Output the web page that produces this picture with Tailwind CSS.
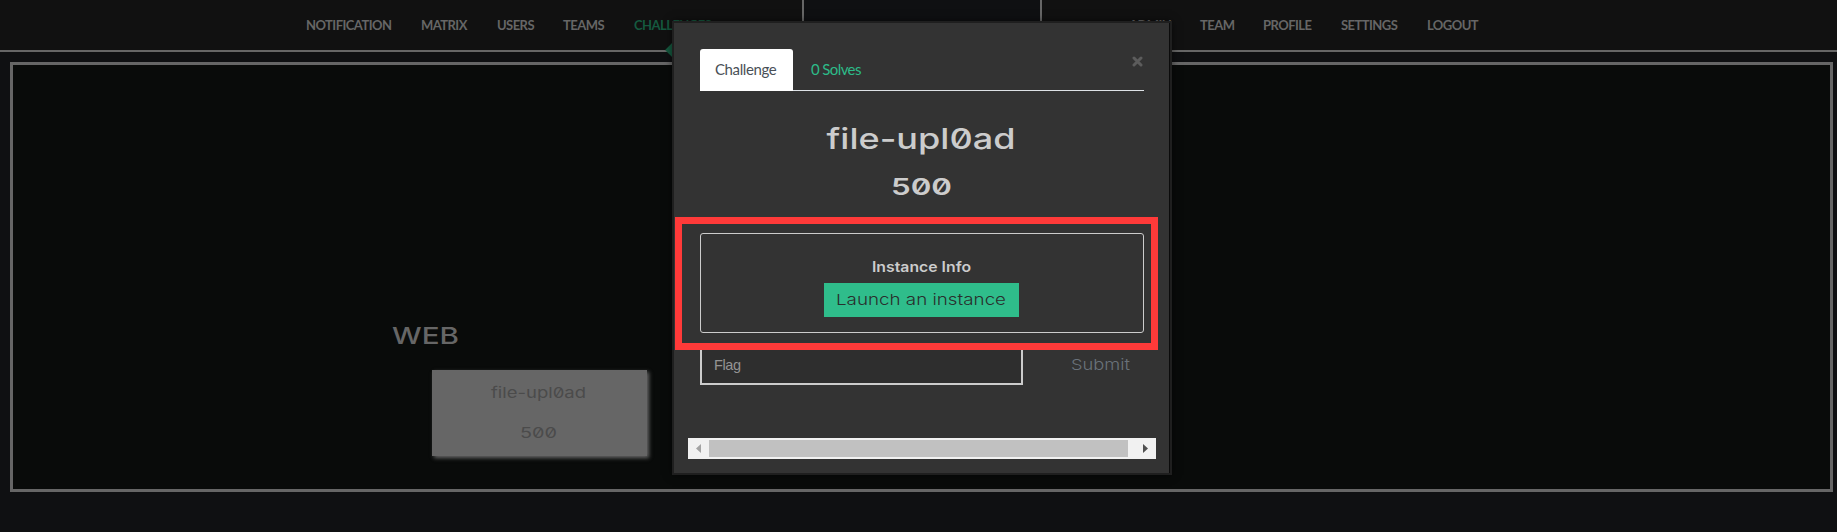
<!DOCTYPE html>
<html lang="en">
<head>
<meta charset="utf-8">
<title>Challenges</title>
<script src="https://cdn.jsdelivr.net/npm/@tailwindcss/browser@4"></script>
</head>
<body class="relative h-[532px] w-[1837px] overflow-hidden bg-[#0f1012] font-['Lato',sans-serif]">
  <!-- navigation -->
  <header class="flex h-[52px] border-b-2 border-[#666] text-[13px] leading-[20px] font-bold tracking-[-0.55px] text-[#666]">
    <nav class="flex w-[804px] gap-[30px] border-r-2 border-[#666] bg-[#111] pt-[15px] pl-[306px] whitespace-nowrap">
      <a class="w-[85px]">NOTIFICATION</a><a class="w-[46px]">MATRIX</a><a class="w-[36px]">USERS</a><a class="w-[41px]">TEAMS</a>
      <a class="relative w-[76px] text-[#15593f]">CHALLENGES<span class="absolute top-[28px] left-[34px] size-[14px] rotate-45 bg-[#15593f]"></span></a>
    </nav>
    <div class="w-[236px]"></div>
    <nav class="flex flex-1 gap-[30px] border-l-2 border-[#666] bg-[#111] pt-[15px] pl-[87px] whitespace-nowrap">
      <a class="w-[41px]">ADMIN</a><a class="w-[33px]">TEAM</a><a class="w-[48px]">PROFILE</a><a class="w-[56px]">SETTINGS</a><a>LOGOUT</a>
    </nav>
  </header>

  <!-- challenge board -->
  <main class="mt-[10px] ml-[10px] h-[430px] w-[1823px] border-[3px] border-[#666] bg-[#090b0a] pt-[256px] pl-[379px] font-['Inter',sans-serif]">
    <svg class="block h-[32px] w-[80px] [font-feature-settings:'zero']"><text x="0" y="23" textLength="67" lengthAdjust="spacingAndGlyphs" class="fill-[#666] text-[23.5px] font-medium">WEB</text></svg>
    <div class="mt-[17px] ml-[40px] h-[86px] w-[215px] bg-[#666] shadow-[2px_2px_4px_#666]">
      <svg class="block h-[86px] w-[215px] fill-[#4b4b4b] text-[15px] [font-feature-settings:'zero']">
        <text x="59" y="28" textLength="95" lengthAdjust="spacingAndGlyphs">file-upl0ad</text>
        <text x="88" y="68" textLength="37" lengthAdjust="spacingAndGlyphs">500</text>
      </svg>
    </div>
  </main>

  <!-- challenge dialog -->
  <section class="absolute top-[21px] left-[672px] h-[454px] w-[500px] border-2 border-[#1f1f1f] bg-[#333] pt-[26px] pl-[26px] shadow-[0_0_8px_#0008,inset_-1px_0_#0b0b0b]">
    <div class="flex h-[42px] w-[444px] border-b border-[#dee2e6] text-[15px] leading-[22px] tracking-[-0.4px]">
      <div class="h-[42px] w-[93px] rounded-t-[3px] bg-white pt-[9px] pl-[15px] text-[#495057]">Challenge</div>
      <div class="pt-[9px] pl-[18px] tracking-[-0.6px] text-[#2dbc89]">0 Solves</div>
    </div>
    <button class="absolute top-[33px] left-[458px]" aria-label="Close"><svg class="block size-[11px] stroke-[#5c5c5c]" viewBox="0 0 11 11"><path d="M2 2 9 9M9 2 2 9" stroke-width="3" stroke-linecap="round"/></svg></button>
    <svg class="block h-[142px] w-[444px] fill-[#ccc] font-['Inter',sans-serif] [font-feature-settings:'zero']">
      <text x="126.5" y="58" textLength="189" lengthAdjust="spacingAndGlyphs" class="text-[28.5px] font-medium">file-upl0ad</text>
      <text x="191" y="104" textLength="61" lengthAdjust="spacingAndGlyphs" class="text-[23.5px] font-semibold">500</text>
    </svg>
    <div class="flex h-[100px] w-[444px] flex-col items-center rounded-[3px] border border-[#ccc] pt-[24px] font-['Inter',sans-serif]">
      <svg class="block h-[25px] w-[100px] shrink-0 fill-[#ccc] text-[14px] font-semibold"><text x="0" y="14" textLength="99" lengthAdjust="spacingAndGlyphs">Instance Info</text></svg>
      <button class="mr-px h-[34px] w-[195px] shrink-0 bg-[#2fbd8b]"><svg class="block h-[34px] w-[195px] fill-[#292f2d] text-[15px] font-light"><text x="12" y="22" textLength="170" lengthAdjust="spacingAndGlyphs">Launch an instance</text></svg></button>
    </div>
    <div class="mt-[12px] flex h-[40px] w-[444px]">
      <div class="h-[40px] w-[323px] border-2 border-t-0 border-[#ccc] bg-[#2e2e2e] pt-[9px] pl-[12px] font-['Liberation_Sans',sans-serif] text-[14.5px] leading-[22px] tracking-[-0.4px] text-[#949494]">Flag</div>
      <svg class="ml-[48px] block h-[40px] w-[70px] fill-[#6a727a] font-['Inter',sans-serif] text-[15px] font-light"><text x="0" y="25" textLength="59" lengthAdjust="spacingAndGlyphs">Submit</text></svg>
    </div>
    <div class="mt-[53px] -ml-[12px] flex h-[21px] w-[468px] items-center bg-[#f1f1f1]">
      <svg class="block h-[21px] w-[21px] fill-[#a3a3a3]"><path d="M8 10.5 13 6v9z"/></svg>
      <div class="h-[17px] w-[419px] bg-[#c1c1c1]"></div>
      <svg class="block h-[21px] w-[28px] fill-[#505050]"><path d="M20 10.5 15 6v9z"/></svg>
    </div>
  </section>
  <!-- highlight over the instance panel -->
  <div class="absolute top-[217px] left-[675px] h-[133px] w-[483px] border-[7px] border-[#ff3a39]"></div>
</body>
</html>
